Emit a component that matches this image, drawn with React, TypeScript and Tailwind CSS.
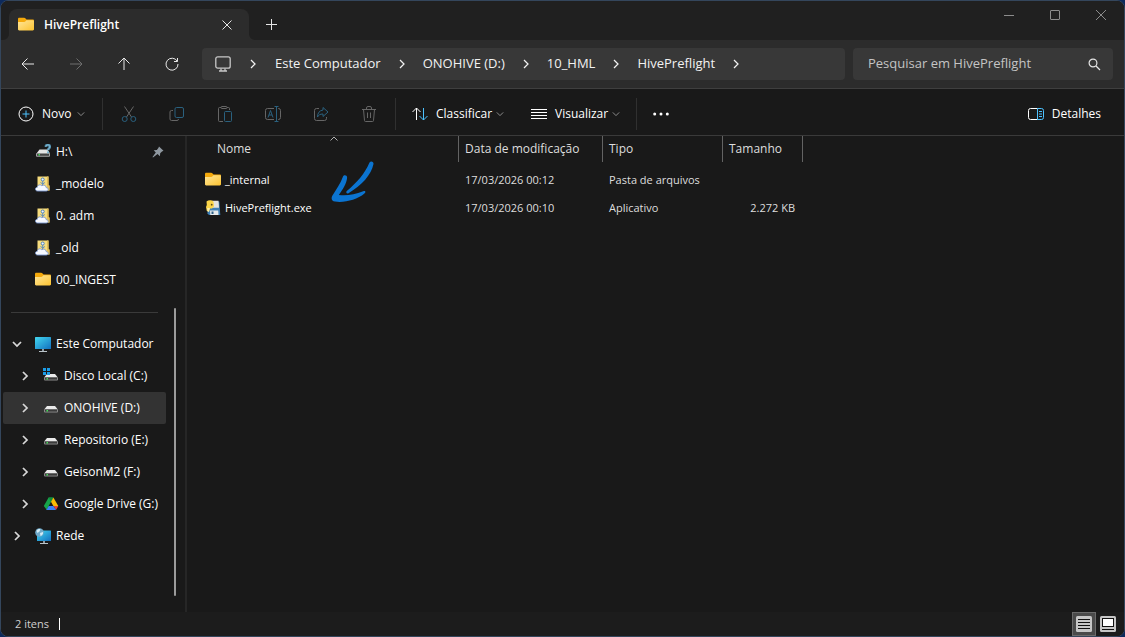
import React, { useState } from 'react';
import clsx from 'clsx';

type IconProps = { className?: string };

interface NavEntry {
  label: string;
  icon: React.FC<IconProps>;
  child?: boolean;
  expandable?: boolean;
  expanded?: boolean;
  pinned?: boolean;
}

interface FileEntry {
  name: string;
  modified: string;
  type: string;
  size: string;
  icon: React.FC<IconProps>;
}

const FolderIcon: React.FC<IconProps> = ({ className }) => (
  <svg viewBox="0 0 16 16" className={clsx('size-4 shrink-0', className)} aria-hidden="true">
    <defs>
      <linearGradient id="folder-front" x1="0" y1="0" x2="1" y2="1">
        <stop offset="0" stopColor="#ffe69a" />
        <stop offset="1" stopColor="#fcc22f" />
      </linearGradient>
    </defs>
    <path d="M0 2C0 1.300.6.800 1.300.800h4.900c.5 0 .8.2 1.100.5l1.200 1.200h6.300c.7 0 1.200.5 1.200 1.200V8H0z" fill="#f5a90b" />
    <path d="M0 5h6.200c.5 0 .8-.2 1.100-.5l.9-.9c.2-.2.5-.3.8-.3h5.800c.7 0 1.200.5 1.200 1.100v7.900c0 .7-.5 1.200-1.200 1.200H1.200C.5 13.500 0 13 0 12.300z" fill="url(#folder-front)" />
  </svg>
);

const DriveBody: React.FC = () => (
  <>
    <path d="M4 6h8l2.600 3.200H1.400z" fill="#e9e9e9" />
    <rect x="1" y="9" width="14" height="3.600" rx="1" fill="#8b8b8b" />
    <rect x="2" y="9.600" width="12" height="2" fill="#3b3b3b" />
    <rect x="3.500" y="10" width="1.500" height="1.500" fill="#45e05a" />
  </>
);

const DriveIcon: React.FC<IconProps> = ({ className }) => (
  <svg viewBox="0 0 16 16" className={clsx('size-4 shrink-0', className)} aria-hidden="true">
    <DriveBody />
  </svg>
);

const SystemDriveIcon: React.FC<IconProps> = ({ className }) => (
  <svg viewBox="0 0 16 16" className={clsx('size-4 shrink-0', className)} aria-hidden="true">
    <DriveBody />
    <path d="M0 0h3v3H0zM4 0h3v3H4zM0 4h3v3H0zM4 4h3v3H4z" fill="#1b9de8" />
  </svg>
);

const UnknownDriveIcon: React.FC<IconProps> = ({ className }) => (
  <svg viewBox="0 0 16 16" className={clsx('size-4 shrink-0', className)} aria-hidden="true">
    <path d="M4.500 5.500h8l2.500 4H1.500z" fill="#e4e4e4" />
    <rect x="1" y="9" width="14" height="3.800" rx="1" fill="#a6a6a6" />
    <rect x="2" y="9.800" width="12" height="2" fill="#444" />
    <rect x="3.500" y="10" width="1.500" height="1.500" fill="#45e05a" />
    <path d="M10.800 2.800c0-2.600 4-2.600 4 0 0 1.800-1.800 1.500-1.800 3.400" fill="none" stroke="#4f8aa8" strokeWidth="2.600" />
    <path d="M10.800 2.800c0-2.600 4-2.600 4 0 0 1.800-1.800 1.500-1.800 3.400" fill="none" stroke="#8cc4dd" />
    <circle cx="13" cy="8.300" r="1.100" fill="#74b5d2" />
  </svg>
);

const CloudFolderIcon: React.FC<IconProps> = ({ className }) => (
  <svg viewBox="0 0 16 16" className={clsx('size-4 shrink-0', className)} aria-hidden="true">
    <path d="M2.500.500h11v9h1v5h-12z" fill="#f6dc7d" />
    <path d="M12 .500h1.500v9h1v5H12z" fill="#e3bd55" />
    <circle cx="7.700" cy="3.500" r="1.500" fill="#eef5ff" stroke="#4c7fb8" />
    <path d="M7.700 5v4M5.500 6.500l2.200 1.500 2.200-1.500" fill="none" stroke="#5e8dbe" />
    <path d="M2.600 15c-2.800 0-2.900-3.500-.3-3.700.3-2.400 2.800-3.200 4.500-1.600 2.200-1.300 4.400-.1 4.400 1.900 2.700.2 2.600 3.400 0 3.400z" fill="#f6f9ff" stroke="#7895cf" strokeWidth=".9" />
  </svg>
);

const ComputerIcon: React.FC<IconProps> = ({ className }) => (
  <svg viewBox="0 0 16 16" className={clsx('size-4 shrink-0', className)} aria-hidden="true">
    <defs>
      <linearGradient id="screen" x1="0" y1="0" x2="1" y2="1">
        <stop offset="0" stopColor="#43d7ef" />
        <stop offset="1" stopColor="#1270c0" />
      </linearGradient>
    </defs>
    <rect x="0" y="1" width="16" height="12" rx=".6" fill="url(#screen)" />
    <path d="M7 13h2v2H7z" fill="#8f9ba3" />
    <path d="M4 15h8v1H4z" fill="#b9c3c9" />
  </svg>
);

const NetworkIcon: React.FC<IconProps> = ({ className }) => (
  <svg viewBox="0 0 16 16" className={clsx('size-4 shrink-0', className)} aria-hidden="true">
    <rect x="2" y="2.500" width="14" height="10.500" rx=".6" fill="url(#screen)" />
    <path d="M8 13h2v2H8z" fill="#8f9ba3" />
    <path d="M5 15h8v1H5z" fill="#b9c3c9" />
    <circle cx="4.500" cy="4.500" r="4.300" fill="#6fa9c9" />
    <path d="M1.500 3C2.500 1 4 .8 5.500 1.200L4.500 3.500 2.500 5zM5 5l3-1c.5 2-1 3.500-2.500 4z" fill="#d3ecf6" />
  </svg>
);

const GoogleDriveIcon: React.FC<IconProps> = ({ className }) => (
  <svg viewBox="0 0 16 16" className={clsx('size-4 shrink-0', className)} aria-hidden="true">
    <path d="M5.600 1.500h4.800L8 5.800 3.700 13.800.8 9.900z" fill="#16a34a" />
    <path d="M5.600 1.500h4.800L8 5.700z" fill="#0f8a3c" />
    <path d="M10.400 1.500l4.900 8.400h-4.900L8 5.700z" fill="#fbbc04" />
    <path d="M15.300 9.900l-2.300 4.200-2.600-4.200z" fill="#ea4335" />
    <path d="M5.700 9.900h4.700l2.600 4.200H3.200z" fill="#3b82f6" />
  </svg>
);

const PythonAppIcon: React.FC<IconProps> = ({ className }) => (
  <svg viewBox="0 0 16 16" className={clsx('size-4 shrink-0', className)} aria-hidden="true">
    <path d="M2.500 1.500h11.800l1 13.500H4L2.500 13.500z" fill="#3f80b5" />
    <path d="M7 .800h6.500l.5 7H7z" fill="#e3e3df" />
    <path d="M5 10.500h8.200l.3 4.500H5.300z" fill="#e6eaec" />
    <path d="M6.500 11.500h2V14h-2z" fill="#2d5f87" />
    <path d="M1.500 1.500C3.500-.2 7 0 8.500 1.800L9 6.500 7 8.500H5l-.8 2.500H1.800L1 7l.8-2z" fill="#fbd548" />
    <path d="M2.200 8h2.600L4 12l-1.500-.5z" fill="#fff0a8" />
    <circle cx="6.700" cy="4.700" r=".9" fill="#5b4a1c" />
  </svg>
);

const PinIcon: React.FC<IconProps> = ({ className }) => (
  <svg viewBox="0 0 12 12" className={clsx('size-3 shrink-0', className)} aria-hidden="true">
    <path d="M7 .500l4.500 4.300-1.500.7-1.800 1.700-.3 3.100-2.300-2.200L1 11.500l-.5-.5 3.300-4.500L1.700 4.300l3.100-.3 1.600-1.900z" fill="#8f98a0" />
  </svg>
);

const ChevronIcon: React.FC<IconProps> = ({ className }) => (
  <svg viewBox="0 0 10 10" className={clsx('shrink-0', className)} fill="none" stroke="currentColor" aria-hidden="true">
    <path d="M3 1l4 4-4 4" />
  </svg>
);

const LineIcon: React.FC<{ children: React.ReactNode; className?: string }> = ({ children, className }) => (
  <svg viewBox="0 0 16 16" className={clsx('size-4 shrink-0', className)} fill="none" stroke="currentColor" aria-hidden="true">
    {children}
  </svg>
);

const navActions = [
  { label: 'Voltar', icon: <path d="M14 8H2M7.500 2.500L2 8l5.500 5.500" /> },
  { label: 'Avançar', disabled: true, icon: <path d="M2 8h12M8.500 2.500L14 8l-5.500 5.500" /> },
  { label: 'Acima', icon: <path d="M8 14V2M2.500 7.500L8 2l5.500 5.500" /> },
  { label: 'Atualizar', icon: <path d="M13.200 5.200A6 6 0 1 0 14 8M13.500 2v3.500H10" /> },
];

const fileActions = [
  {
    label: 'Recortar',
    icon: (
      <>
        <path d="M3.500 0.500l7 10.500M12.500 0.500l-7 10.500" />
        <g stroke="#2a617f">
          <circle cx="3.700" cy="13" r="2.500" />
          <circle cx="12.300" cy="13" r="2.500" />
        </g>
      </>
    ),
  },
  {
    label: 'Copiar',
    icon: (
      <>
        <path d="M4 4.500H2.500a1.500 1.500 0 0 0-1.500 1.500v7A1.500 1.500 0 0 0 2.500 14.500H8a1.500 1.500 0 0 0 1.500-1.500" />
        <rect x="6" y="1.500" width="8.500" height="10" rx="1.500" stroke="#2a617f" />
      </>
    ),
  },
  {
    label: 'Colar',
    icon: (
      <>
        <path d="M6 15.500H2.500a1 1 0 0 1-1-1v-12a1 1 0 0 1 1-1H4M10 1.500h1.500a1 1 0 0 1 1 1V4" />
        <rect x="4" y="0.500" width="6" height="2" rx="1" />
        <rect x="7.500" y="5.500" width="7" height="10" rx="1" stroke="#2a617f" />
      </>
    ),
  },
  {
    label: 'Renomear',
    icon: (
      <>
        <path d="M9 2.500H2.500a2 2 0 0 0-2 2v7a2 2 0 0 0 2 2H9M13 2.500h.5a2 2 0 0 1 2 2v7a2 2 0 0 1-2 2H13" />
        <path d="M3 11.500l2.500-7 2.500 7M4 9h3M11.500 0.500v15M9.500 0.500h4M9.500 15.500h4" stroke="#2a617f" />
      </>
    ),
  },
  {
    label: 'Compartilhar',
    icon: (
      <>
        <path d="M6 2.500H3.500a2 2 0 0 0-2 2v8a2 2 0 0 0 2 2h8a2 2 0 0 0 2-2V11" />
        <path d="M10 1.500L15 6l-5 4.500V8C7 8 5.500 9 4.500 11c0-4 2-6.500 5.500-7z" stroke="#2a617f" />
      </>
    ),
  },
  {
    label: 'Excluir',
    icon: <path d="M1 3.500h14M5.500 3.500V2a1.500 1.500 0 0 1 1.500-1.500h2A1.500 1.500 0 0 1 10.500 2v1.500M2.500 3.500l1 11a1 1 0 0 0 1 1h7a1 1 0 0 0 1-1l1-11M6.500 6.500v5.500M9.500 6.500v5.500" />,
  },
];

const path = ['Este Computador', 'ONOHIVE (D:)', '10_HML', 'HivePreflight'];

const quickAccess: NavEntry[] = [
  { label: 'H:\\', icon: UnknownDriveIcon, pinned: true },
  { label: '_modelo', icon: CloudFolderIcon },
  { label: '0. adm', icon: CloudFolderIcon },
  { label: '_old', icon: CloudFolderIcon },
  { label: '00_INGEST', icon: FolderIcon },
];

const places: NavEntry[] = [
  { label: 'Este Computador', icon: ComputerIcon, expandable: true, expanded: true },
  { label: 'Disco Local (C:)', icon: SystemDriveIcon, child: true, expandable: true },
  { label: 'ONOHIVE (D:)', icon: DriveIcon, child: true, expandable: true },
  { label: 'Repositorio (E:)', icon: DriveIcon, child: true, expandable: true },
  { label: 'GeisonM2 (F:)', icon: DriveIcon, child: true, expandable: true },
  { label: 'Google Drive (G:)', icon: GoogleDriveIcon, child: true, expandable: true },
  { label: 'Rede', icon: NetworkIcon, expandable: true },
];

const files: FileEntry[] = [
  { name: '_internal', modified: '17/03/2026 00:12', type: 'Pasta de arquivos', size: '', icon: FolderIcon },
  { name: 'HivePreflight.exe', modified: '17/03/2026 00:10', type: 'Aplicativo', size: '2.272 KB', icon: PythonAppIcon },
];

const TitleBar: React.FC = () => (
  <header className="flex h-[39px] shrink-0 items-end bg-[#202020] pl-2">
    <div className="relative flex h-[31px] w-60 items-center rounded-t-lg bg-[#2c2c2c] pl-[9px] pr-3">
      <svg viewBox="0 0 6 6" className="absolute -left-1.5 bottom-0 size-1.5" aria-hidden="true">
        <path d="M6 0v6H0a6 6 0 0 0 6-6z" fill="#2c2c2c" />
      </svg>
      <svg viewBox="0 0 6 6" className="absolute -right-1.5 bottom-0 size-1.5" aria-hidden="true">
        <path d="M0 0v6h6a6 6 0 0 1-6-6z" fill="#2c2c2c" />
      </svg>
      <FolderIcon />
      <span className="ml-2.5 flex-1 text-xs font-semibold text-white">HivePreflight</span>
      <button type="button" aria-label="Fechar guia" className="flex size-5 items-center justify-center">
        <svg viewBox="0 0 10 10" className="size-2.5" stroke="#e6e6e6" aria-hidden="true">
          <path d="M.5.500l9 9M9.500.500l-9 9" />
        </svg>
      </button>
    </div>
    <button type="button" aria-label="Nova guia" className="ml-[7px] flex size-[31px] items-center justify-center">
      <svg viewBox="0 0 11 11" className="size-[11px]" stroke="#e6e6e6" aria-hidden="true">
        <path d="M5.500 0v11M0 5.500h11" />
      </svg>
    </button>
    <div className="ml-auto flex self-start text-[#8c8c8c]">
      <button type="button" aria-label="Minimizar" className="flex h-7 w-[46px] items-center justify-center">
        <svg viewBox="0 0 10 10" className="size-2.5" stroke="currentColor" aria-hidden="true">
          <path d="M0 5.500h10" />
        </svg>
      </button>
      <button type="button" aria-label="Maximizar" className="flex h-7 w-[46px] items-center justify-center">
        <svg viewBox="0 0 10 10" className="size-2.5" fill="none" stroke="currentColor" aria-hidden="true">
          <rect x=".5" y=".5" width="9" height="9" rx=".5" />
        </svg>
      </button>
      <button type="button" aria-label="Fechar" className="flex h-7 w-[46px] items-center justify-center">
        <svg viewBox="0 0 10 10" className="size-2.5" stroke="currentColor" aria-hidden="true">
          <path d="M0 0l10 10M10 0L0 10" />
        </svg>
      </button>
    </div>
  </header>
);

const AddressBar: React.FC = () => (
  <div className="flex h-[49px] shrink-0 items-center border-b border-[#3f3f3f] bg-[#2c2c2c] pl-[3px] pr-[11px]">
    {navActions.map(action => (
      <button
        key={action.label}
        type="button"
        aria-label={action.label}
        disabled={action.disabled}
        className="flex h-8 w-12 items-center justify-center text-[#e8e8e8] disabled:text-[#6e6e6e]"
      >
        <LineIcon>{action.icon}</LineIcon>
      </button>
    ))}
    <nav aria-label="Caminho" className="ml-1.5 flex h-8 min-w-0 flex-1 items-center rounded bg-[#383838] pl-[13px] text-[13px] text-[#f2f2f2]">
      <LineIcon className="text-[#c8c8c8]">
        <rect x=".8" y=".8" width="14.400" height="11.400" rx="2" strokeWidth="1.300" />
        <path d="M6 12.500v2M10 12.500v2M4 15h8" strokeWidth="1.300" />
      </LineIcon>
      <span className="flex w-[44px] justify-center">
        <ChevronIcon className="size-2.5 stroke-[1.250]" />
      </span>
      {path.map(part => (
        <React.Fragment key={part}>
          <a href="#" className="whitespace-nowrap">{part}</a>
          <span className="flex w-[42px] justify-center">
            <ChevronIcon className="size-2.5 stroke-[1.250]" />
          </span>
        </React.Fragment>
      ))}
    </nav>
    <label className="ml-2 flex h-8 w-[260px] items-center rounded bg-[#383838] pl-[15px] pr-3">
      <input
        type="text"
        aria-label="Pesquisar"
        placeholder="Pesquisar em HivePreflight"
        className="min-w-0 flex-1 bg-transparent text-[13px] text-white outline-none placeholder:text-[#c4c4c4]"
      />
      <svg viewBox="0 0 14 14" className="size-3.5" fill="none" stroke="#e6e6e6" strokeWidth="1.200" aria-hidden="true">
        <circle cx="6" cy="6" r="3.900" />
        <path d="M9 9l4 4" />
      </svg>
    </label>
  </div>
);

const Divider: React.FC = () => <span className="h-8 w-px bg-[#303030]" />;

const Toolbar: React.FC = () => (
  <div className="flex h-[47px] shrink-0 items-center border-b border-[#3a3a3a] bg-[#191919] pl-[17px] pr-[23px] pt-[3px] text-xs font-medium text-white">
    <button type="button" className="flex w-[84px] items-center gap-2">
      <LineIcon>
        <circle cx="8" cy="8" r="7" />
        <path d="M8 4.500v7M4.500 8h7" stroke="#4cc2ff" />
      </LineIcon>
      Novo
      <ChevronIcon className="-ml-0.5 size-2 rotate-90 text-[#a8a8a8]" />
    </button>
    <Divider />
    <div className="mx-0.5 flex">
      {fileActions.map(action => (
        <button key={action.label} type="button" aria-label={action.label} disabled className="flex h-8 w-12 items-center justify-center text-[#666666]">
          <LineIcon>{action.icon}</LineIcon>
        </button>
      ))}
    </div>
    <Divider />
    <button type="button" className="ml-4 flex w-[103px] items-center gap-2">
      <LineIcon>
        <path d="M4.500 14V2M.5 6l4-4 4 4" />
        <path d="M11.500 2v12M7.500 10l4 4 4-4" stroke="#4cc2ff" />
      </LineIcon>
      Classificar
      <ChevronIcon className="-ml-1 size-2 rotate-90 text-[#a8a8a8]" />
    </button>
    <button type="button" className="ml-4 flex w-[105px] items-center gap-2">
      <LineIcon>
        <path d="M0 3.500h16M0 6.500h16M0 9.500h16M0 12.500h16" />
      </LineIcon>
      Visualizar
      <ChevronIcon className="-ml-1 size-2 rotate-90 text-[#a8a8a8]" />
    </button>
    <Divider />
    <button type="button" aria-label="Ver mais" className="flex h-8 w-12 items-center justify-center">
      <svg viewBox="0 0 16 4" className="h-1 w-4" fill="currentColor" aria-hidden="true">
        <circle cx="1.700" cy="2" r="1.500" />
        <circle cx="8" cy="2" r="1.500" />
        <circle cx="14.300" cy="2" r="1.500" />
      </svg>
    </button>
    <button type="button" className="ml-auto flex items-center gap-2">
      <LineIcon>
        <path d="M9.500 2.500h-7a2 2 0 0 0-2 2v7a2 2 0 0 0 2 2h7" />
        <path d="M9.500 2.500h4a2 2 0 0 1 2 2v7a2 2 0 0 1-2 2h-4zM11 5.500h3M11 8h3M11 10.500h3" stroke="#4cc2ff" />
      </LineIcon>
      Detalhes
    </button>
  </div>
);

const NavItem: React.FC<{ entry: NavEntry; selected: boolean; onSelect: () => void }> = ({ entry, selected, onSelect }) => {
  const Icon = entry.icon;
  return (
    <li>
      <button
        type="button"
        onClick={onSelect}
        className={clsx('flex h-8 w-full items-center rounded-xs pr-0.5 text-left', entry.child && 'pl-2', selected && 'bg-[#333333]')}
      >
        <span className="mr-1 flex w-7 justify-center">
          {entry.expandable && (
            <ChevronIcon className={clsx('size-2.5 stroke-[1.750] text-[#d8d8d8]', entry.expanded && 'rotate-90')} />
          )}
        </span>
        <Icon />
        <span className="ml-[5px] flex-1 whitespace-nowrap">{entry.label}</span>
        {entry.pinned && <PinIcon />}
      </button>
    </li>
  );
};

const Sidebar: React.FC = () => {
  const [selected, setSelected] = useState('ONOHIVE (D:)');

  return (
    <aside className="flex w-[186px] shrink-0 border-r-2 border-[#262626] pl-0.5 text-xs text-white">
      <div className="w-[163px]">
        <ul>
          {quickAccess.map(entry => (
            <NavItem key={entry.label} entry={entry} selected={selected === entry.label} onSelect={() => setSelected(entry.label)} />
          ))}
        </ul>
        <hr className="mx-2 -mb-px mt-4 border-[#3a3a3a]" />
        <ul className="mt-4">
          {places.map(entry => (
            <NavItem key={entry.label} entry={entry} selected={selected === entry.label} onSelect={() => setSelected(entry.label)} />
          ))}
        </ul>
      </div>
      <div className="ml-2 flex w-0.5 flex-col pb-4 pt-[172px]">
        <span className="flex-1 rounded-full bg-[#9b9b9b]" />
      </div>
    </aside>
  );
};

const columns = ['Nome', 'Data de modificação', 'Tipo', 'Tamanho'];

const FileList: React.FC = () => (
  <main className="relative min-w-0 flex-1 pl-px">
    <table className="w-[615px] table-fixed text-left text-[11px] text-[#dedede]">
      <colgroup>
        <col className="w-[271px]" />
        <col className="w-36" />
        <col className="w-[120px]" />
        <col className="w-20" />
      </colgroup>
      <thead>
        <tr className="h-[30px]">
          {columns.map((column, index) => (
            <th key={column} scope="col" className="p-0 align-top text-xs font-normal" aria-sort={index === 0 ? 'ascending' : undefined}>
              <button
                type="button"
                className={clsx('flex h-[26px] w-full items-center border-r border-[#636363]', index === 0 ? 'pl-[29px]' : 'pl-1.5')}
              >
                {column}
              </button>
            </th>
          ))}
        </tr>
      </thead>
      <tbody>
        {files.map(file => (
          <tr key={file.name} className="h-7">
            <td className="p-0">
              <span className="flex items-center gap-1 pl-[17px] text-white">
                <file.icon />
                {file.name}
              </span>
            </td>
            <td className="p-0 pl-1.5">{file.modified}</td>
            <td className="p-0 pl-1.5">{file.type}</td>
            <td className="p-0 pr-2 text-right">{file.size}</td>
          </tr>
        ))}
      </tbody>
    </table>
    {/* sort direction marker */}
    <svg viewBox="0 0 8 5" className="absolute left-[143px] top-0 h-[5px] w-2" fill="none" stroke="#b0b0b0" aria-hidden="true">
      <path d="M.5 4.500L4 1l3.500 3.500" />
    </svg>
    {/* hand-drawn arrow pointing at the executable */}
    <svg viewBox="0 0 44 44" className="absolute left-36 top-6 size-11" fill="#0b74d1" aria-hidden="true">
      <path d="M38.500 2.500c1.200-2 4.400-1 4 1.600-2.200 10.600-11.500 21.500-25 29.100-1.600.8-3-.8-1.700-2.200C26.500 22 33.500 14 38.500 2.500z" />
      <path d="M12 16.500c.8-2 4.200-1.500 4.100.9-.3 6-4.500 12-8.300 17.600 8.200.9 15.800-.4 24.400-3.700 2.200-.8 3 .8 1.200 2.200C26 39.700 14 42.900 4 41.600.8 41-.2 38.500 1.300 35.800 5 29.500 9.500 24 12 16.500z" />
    </svg>
  </main>
);

const StatusBar: React.FC = () => (
  <footer className="flex h-6 shrink-0 items-center bg-[#1c1c1c] pl-3.5 pr-1 text-[11px] text-[#cfcfcf]">
    <span>2 itens</span>
    <span className="ml-2.5 h-3 w-px bg-white" />
    <div className="ml-auto flex">
      <button type="button" aria-label="Detalhes" aria-pressed="true" className="flex size-6 items-center justify-center border border-[#6b6b6b] bg-[#4a4a4a]">
        <svg viewBox="0 0 16 16" className="size-4" aria-hidden="true">
          <rect width="16" height="16" rx="1.500" fill="#c6c6c6" />
          <path d="M2 3.500h12M2 6.500h12M2 9.500h12M2 12.500h12" stroke="#111" />
        </svg>
      </button>
      <button type="button" aria-label="Ícones grandes" aria-pressed="false" className="flex size-6 items-center justify-center">
        <svg viewBox="0 0 16 16" className="size-4" aria-hidden="true">
          <rect width="16" height="16" rx="1.500" fill="#c6c6c6" />
          <rect x="2.500" y="2.500" width="11" height="8" fill="#fff" stroke="#111" />
          <path d="M2 13.500h12" stroke="#111" />
        </svg>
      </button>
    </div>
  </footer>
);

const App: React.FC = () => (
  <div className="h-screen bg-[#0d2a5c] font-['Segoe_UI','Open_Sans',sans-serif]">
    <div className="flex h-full flex-col overflow-hidden rounded-lg border border-[#34465c] bg-[#191919]">
      <TitleBar />
      <AddressBar />
      <Toolbar />
      <div className="flex min-h-0 flex-1">
        <Sidebar />
        <FileList />
      </div>
      <StatusBar />
    </div>
  </div>
);

export default App;
